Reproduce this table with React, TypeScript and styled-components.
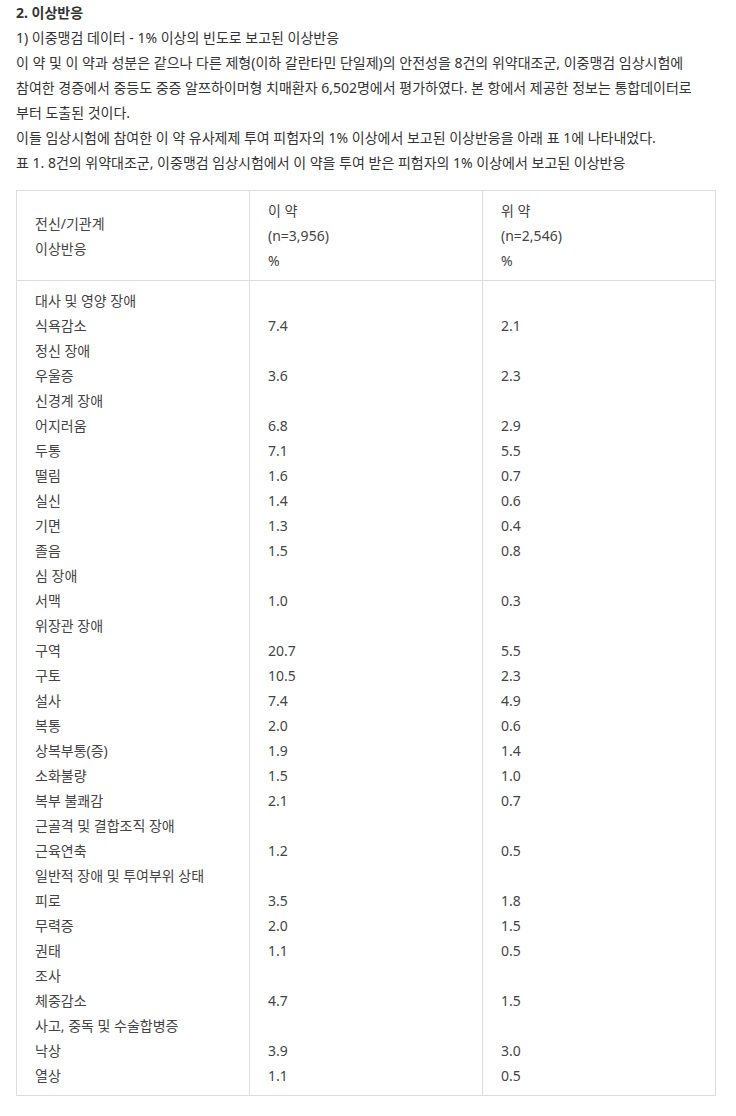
import React from "react";
import styled, { createGlobalStyle } from "styled-components";

const GlobalStyle = createGlobalStyle`
  body {
    margin: 0;
    background: #ffffff;
    font-family: "Noto Sans", "Noto Sans CJK KR", sans-serif;
    font-size: 14px;
    color: #333333;
  }
`;

type Row = { name: string; drug?: string; placebo?: string };

const rows: Row[] = [
  { name: "대사 및 영양 장애" },
  { name: "식욕감소", drug: "7.4", placebo: "2.1" },
  { name: "정신 장애" },
  { name: "우울증", drug: "3.6", placebo: "2.3" },
  { name: "신경계 장애" },
  { name: "어지러움", drug: "6.8", placebo: "2.9" },
  { name: "두통", drug: "7.1", placebo: "5.5" },
  { name: "떨림", drug: "1.6", placebo: "0.7" },
  { name: "실신", drug: "1.4", placebo: "0.6" },
  { name: "기면", drug: "1.3", placebo: "0.4" },
  { name: "졸음", drug: "1.5", placebo: "0.8" },
  { name: "심 장애" },
  { name: "서맥", drug: "1.0", placebo: "0.3" },
  { name: "위장관 장애" },
  { name: "구역", drug: "20.7", placebo: "5.5" },
  { name: "구토", drug: "10.5", placebo: "2.3" },
  { name: "설사", drug: "7.4", placebo: "4.9" },
  { name: "복통", drug: "2.0", placebo: "0.6" },
  { name: "상복부통(증)", drug: "1.9", placebo: "1.4" },
  { name: "소화불량", drug: "1.5", placebo: "1.0" },
  { name: "복부 불쾌감", drug: "2.1", placebo: "0.7" },
  { name: "근골격 및 결합조직 장애" },
  { name: "근육연축", drug: "1.2", placebo: "0.5" },
  { name: "일반적 장애 및 투여부위 상태" },
  { name: "피로", drug: "3.5", placebo: "1.8" },
  { name: "무력증", drug: "2.0", placebo: "1.5" },
  { name: "권태", drug: "1.1", placebo: "0.5" },
  { name: "조사" },
  { name: "체중감소", drug: "4.7", placebo: "1.5" },
  { name: "사고, 중독 및 수술합병증" },
  { name: "낙상", drug: "3.9", placebo: "3.0" },
  { name: "열상", drug: "1.1", placebo: "0.5" },
];

const Page = styled.div`
  padding: 0 16px 20px;
  line-height: 25px;
`;

const Title = styled.h2`
  margin: 0;
  font-size: 14px;
  font-weight: 700;
  line-height: 25px;
  color: #333333;
`;

const Para = styled.p`
  margin: 0;
  white-space: nowrap;
`;

const Table = styled.table`
  width: 700px;
  margin-top: 15px;
  border-collapse: collapse;
  table-layout: fixed;
`;

const Cell = styled.td<{ $middle?: boolean }>`
  border: 1px solid #dddddd;
  padding: 7px 18px;
  vertical-align: ${(p) => (p.$middle ? "middle" : "top")};
  line-height: 25px;
  color: #444444;
`;

const Line = styled.div`
  height: 25px;
  white-space: nowrap;
`;

const App: React.FC = () => {
  return (
    <>
      <GlobalStyle />
      <Page>
        <Title>2. 이상반응</Title>
        <Para>1) 이중맹검 데이터 - 1% 이상의 빈도로 보고된 이상반응</Para>
        <Para>
          이 약 및 이 약과 성분은 같으나 다른 제형(이하 갈란타민 단일제)의 안전성을 8건의 위약대조군, 이중맹검 임상시험에
          <br />
          참여한 경증에서 중등도 중증 알쯔하이머형 치매환자 6,502명에서 평가하였다. 본 항에서 제공한 정보는 통합데이터로
          <br />
          부터 도출된 것이다.
        </Para>
        <Para>이들 임상시험에 참여한 이 약 유사제제 투여 피험자의 1% 이상에서 보고된 이상반응을 아래 표 1에 나타내었다.</Para>
        <Para>표 1. 8건의 위약대조군, 이중맹검 임상시험에서 이 약을 투여 받은 피험자의 1% 이상에서 보고된 이상반응</Para>
        <Table>
          <tbody>
            <tr>
              <Cell $middle>
                <Line>전신/기관계</Line>
                <Line>이상반응</Line>
              </Cell>
              <Cell>
                <Line>이 약</Line>
                <Line>(n=3,956)</Line>
                <Line>%</Line>
              </Cell>
              <Cell>
                <Line>위 약</Line>
                <Line>(n=2,546)</Line>
                <Line>%</Line>
              </Cell>
            </tr>
            <tr>
              <Cell>
                {rows.map((r) => (
                  <Line key={r.name}>{r.name}</Line>
                ))}
              </Cell>
              <Cell>
                {rows.map((r) => (
                  <Line key={r.name}>{r.drug ?? ""}</Line>
                ))}
              </Cell>
              <Cell>
                {rows.map((r) => (
                  <Line key={r.name}>{r.placebo ?? ""}</Line>
                ))}
              </Cell>
            </tr>
          </tbody>
        </Table>
      </Page>
    </>
  );
};

export default App;
